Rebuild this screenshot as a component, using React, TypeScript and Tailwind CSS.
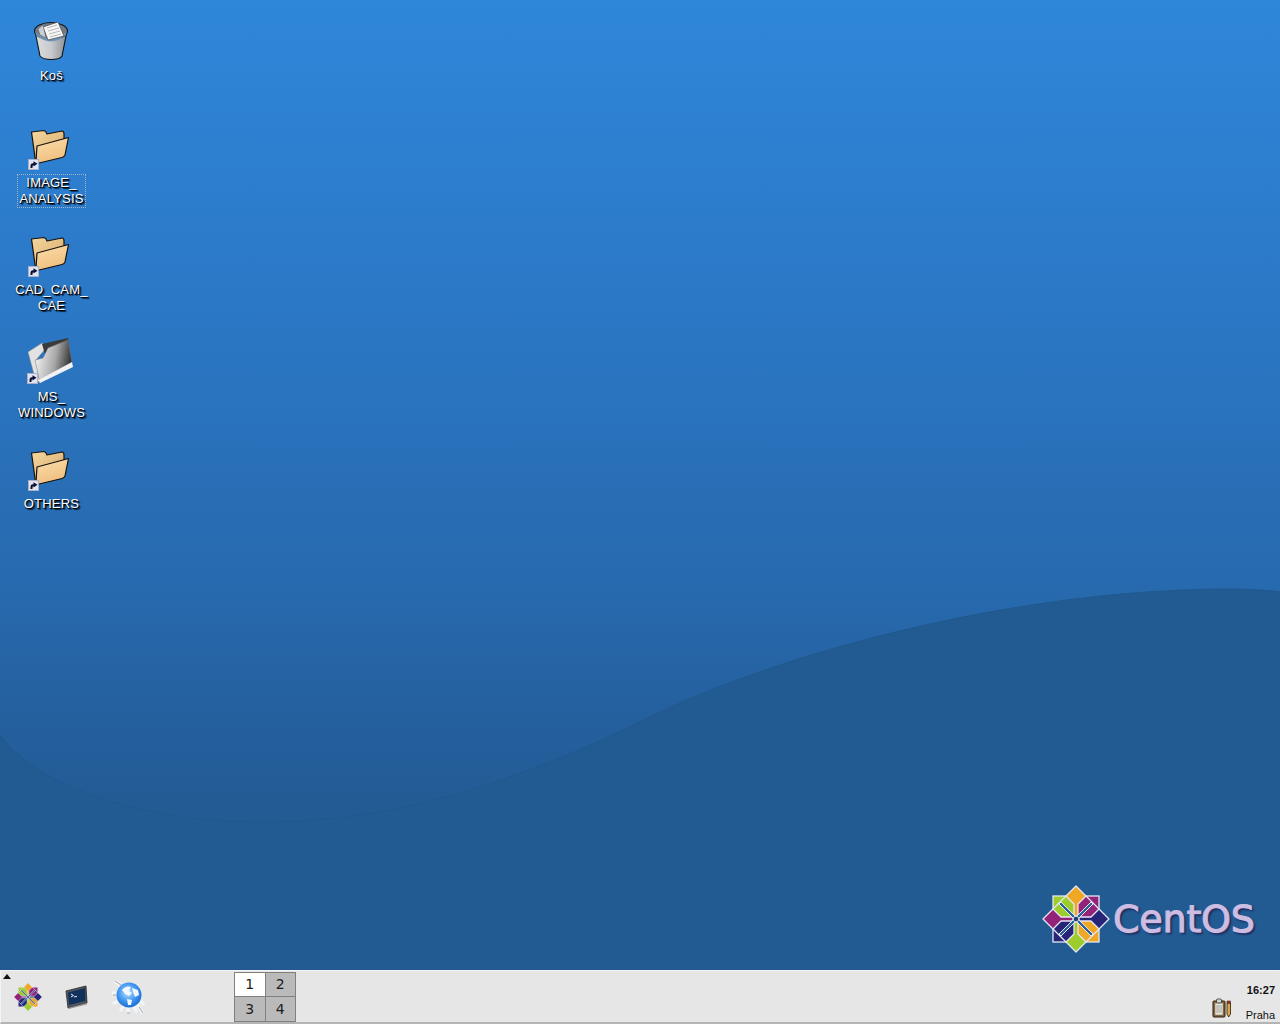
import React from "react";

function Badge({ className }: { className: string }) {
  return (
    <svg width="11" height="11" viewBox="0 0 11 11" className={`absolute ${className}`}>
      <rect x="0.5" y="0.5" width="10" height="10" fill="#dfe3f2" stroke="#aab0c8" />
      <path d="M2.5 9 L2.5 6.5 Q2.5 4.2 5 4.2 L5.5 4.2 L5.5 2.2 L9.5 4.8 L5.5 7.6 L5.5 5.9 Q4.4 5.9 4.4 9 Z" fill="#0c1030" />
    </svg>
  );
}

function Folder() {
  return (
    <div className="relative w-[44px] h-[40px]">
      <svg width="44" height="40" viewBox="0 0 44 40" className="absolute left-0 top-0">
        <defs>
          <linearGradient id="fb" x1="0" y1="0" x2="1" y2="1">
            <stop offset="0" stopColor="#f5d8a0" />
            <stop offset="1" stopColor="#d6a666" />
          </linearGradient>
          <linearGradient id="ff" x1="0" y1="0" x2="0.4" y2="1">
            <stop offset="0" stopColor="#fbdfab" />
            <stop offset="1" stopColor="#efbf80" />
          </linearGradient>
        </defs>
        <path d="M2.5 4 L15 2.5 Q17 3 18 6 L33 3 Q35 3 35 6 L35 11 L8 33 L6.5 33 Z" fill="url(#fb)" stroke="#141210" strokeWidth="1.2" strokeLinejoin="round" />
        <path d="M8 18 L39.5 9.5 L36 27 Q35 29 33 29.5 L8 35.5 Q6.5 35 7 33 Z" fill="url(#ff)" stroke="#141210" strokeWidth="1.2" strokeLinejoin="round" />
      </svg>
      <Badge className="left-[-1px] bottom-[-2px]" />
    </div>
  );
}

function GreyFolder() {
  return (
    <div className="relative w-[48px] h-[48px]">
      <svg width="48" height="48" viewBox="0 0 48 48" className="absolute left-0 top-0">
        <defs>
          <linearGradient id="gf" x1="0" y1="0.3" x2="1" y2="0.5">
            <stop offset="0" stopColor="#f4f4f4" />
            <stop offset="0.55" stopColor="#a8a8a8" />
            <stop offset="1" stopColor="#2a2a2a" />
          </linearGradient>
        </defs>
        <path d="M1 14 L15 5 L19 10 L9 22 L13 45 L8 40 Z" fill="#e2e2e2" stroke="#8a8a8a" strokeWidth="0.5" />
        <path d="M15 6 L41 0 L44 22 L22 30 Z" fill="#3a3a3a" />
        <path d="M8 22 L16 20 L21 10 L41 2 L45 25 L13 45 Z" fill="url(#gf)" stroke="#777" strokeWidth="0.5" />
        <path d="M13 45 L46 29 L45 24 L11.5 42 Z" fill="#f2f2f2" />
      </svg>
      <Badge className="left-0 bottom-[2px]" />
    </div>
  );
}

function Trash() {
  return (
    <svg width="36" height="40" viewBox="0 0 36 40">
      <defs>
        <linearGradient id="tb" x1="0" y1="0" x2="1" y2="0">
          <stop offset="0" stopColor="#dcdee0" />
          <stop offset="0.5" stopColor="#c8cacd" />
          <stop offset="1" stopColor="#8a8e92" />
        </linearGradient>
      </defs>
      <path d="M2 10 L7 35 Q10 38.5 18 38.5 Q27 38.5 29 35 L34 10 Z" fill="url(#tb)" stroke="#111" strokeWidth="1.1" />
      <ellipse cx="18" cy="10" rx="16.5" ry="8.5" fill="#6f7c88" stroke="#111" strokeWidth="1.1" />
      <path d="M2.5 11 Q18 24 33.5 11 L33 14 Q18 27 3 14 Z" fill="#6d94b8" />
      <path d="M10 6 L25 1 L31 15 L15 19 Z" fill="#f6f6f6" stroke="#444" strokeWidth="0.7" />
      <path d="M14 7 L24 4 M15 10 L26 7 M16 13 L27 10 M17 16 L28 13" stroke="#999" strokeWidth="0.7" />
      <path d="M5 8 L10 4 L13 17 L7 14 Z" fill="#c9ced3" stroke="#555" strokeWidth="0.5" />
    </svg>
  );
}

function Logo({ size }: { size: number }) {
  const g = "#9ccd2a", p = "#932279", o = "#efa724", b = "#262577", w = "#e6e6f4", m = "#2a6196";
  return (
    <svg width={size} height={size} viewBox="-35 -35 70 70" className="block">
      <rect x="-23" y="-23" width="22" height="22" fill={g} stroke={w} strokeWidth="1.3" />
      <rect x="1" y="-23" width="22" height="22" fill={p} stroke={w} strokeWidth="1.3" />
      <rect x="1" y="1" width="22" height="22" fill={o} stroke={w} strokeWidth="1.3" />
      <rect x="-23" y="1" width="22" height="22" fill={b} stroke={w} strokeWidth="1.3" />
      <path d="M0 -33 L-10 -23 L-2 -15 L-2 -3 L2 -3 L2 -15 L10 -23 Z" fill={o} stroke={w} strokeWidth="1.3" strokeLinejoin="round" />
      <path d="M0 33 L-10 23 L-2 15 L-2 3 L2 3 L2 15 L10 23 Z" fill={g} stroke={w} strokeWidth="1.3" strokeLinejoin="round" />
      <path d="M-33 0 L-23 -10 L-15 -2 L-3 -2 L-3 2 L-15 2 L-23 10 Z" fill={p} stroke={w} strokeWidth="1.3" strokeLinejoin="round" />
      <path d="M33 0 L23 -10 L15 -2 L3 -2 L3 2 L15 2 L23 10 Z" fill={b} stroke={w} strokeWidth="1.3" strokeLinejoin="round" />
      <path d="M-10 -23 L-23 -10 M10 -23 L23 -10 M-10 23 L-23 10 M10 23 L23 10" stroke={w} strokeWidth="1.3" />
      <path d="M-17 -15 L-15 -17 L0 -2 L15 -17 L17 -15 L2 0 L17 15 L15 17 L0 2 L-15 17 L-17 15 L-2 0 Z" fill={m} stroke={w} strokeWidth="1" strokeLinejoin="round" />
      <circle cx="0" cy="0" r="2.8" fill="#1b3f73" stroke="#dfe8f4" strokeWidth="0.9" />
    </svg>
  );
}

function Terminal() {
  return (
    <svg width="24" height="24" viewBox="0 0 24 24" className="block">
      <path d="M1 6 L21 1 L22 18 L3 23 Z" fill="#55585c" stroke="#222" strokeWidth="0.8" />
      <path d="M3 7.5 L20 3 L20.5 16 L4 20 Z" fill="#12305c" />
      <path d="M6 9 L8.5 10.5 L6 12" stroke="#e8eef8" strokeWidth="1" fill="none" />
      <path d="M9 12 L12 11.3" stroke="#e8eef8" strokeWidth="1" />
      <path d="M3 23 L22 18 L22 19.5 L4 24 Z" fill="#9a9da0" />
    </svg>
  );
}

function Globe() {
  return (
    <svg width="34" height="34" viewBox="0 0 34 34" className="block">
      <defs>
        <radialGradient id="gl" cx="0.45" cy="0.4" r="0.65">
          <stop offset="0" stopColor="#b8e0ff" />
          <stop offset="0.6" stopColor="#3a92ee" />
          <stop offset="1" stopColor="#1566cc" />
        </radialGradient>
      </defs>
      <path d="M4 2 L11 7 M1 13 L7 14 M2 23 L8 20 M16 32 L16 27 M30 32 L25 24 M9 30 L12 25 M24 31 L22 26 M31 24 L28 20" stroke="#f2f4f6" strokeWidth="3.4" strokeLinecap="round" />
      <path d="M3 1 L9 5 M15 33 L18 33 M31 33 L27 27 M1 15 L4 15" stroke="#7c8794" strokeWidth="0.7" />
      <circle cx="17" cy="15" r="12.5" fill="url(#gl)" />
      <path d="M10 10 Q14 5 19 7 L17 11 L20 13 L17 16 L13 14 Z M20 8 L26 10 L27 15 L23 17 L21 12 Z M15 19 L20 20 L19 25 L16 25 Z" fill="#f2f8ff" />
    </svg>
  );
}

function Clipboard() {
  return (
    <svg width="20" height="20" viewBox="0 0 20 20" className="block">
      <rect x="1" y="3" width="12" height="16" rx="1" fill="#8a6a3c" stroke="#2a1a0a" strokeWidth="1" />
      <rect x="3" y="5" width="8" height="12" fill="#e9e6d8" stroke="#666" strokeWidth="0.5" />
      <path d="M4 8 H10 M4 10 H10 M4 12 H10 M4 14 H10" stroke="#777" strokeWidth="0.6" />
      <rect x="4.5" y="1" width="5" height="4" rx="1" fill="#d0d0c8" stroke="#222" strokeWidth="0.7" />
      <path d="M15 5 H18.5 V16 L16.7 19 L15 16 Z" fill="#d9a84a" stroke="#2a1a0a" strokeWidth="0.8" />
      <rect x="15" y="3" width="3.5" height="2" fill="#b33" stroke="#2a1a0a" strokeWidth="0.5" />
    </svg>
  );
}

function Item({ icon, lines, focus }: { icon: React.ReactNode; lines: string[]; focus?: boolean }) {
  return (
    <div className="h-[107px] w-[80px] flex flex-col items-center">
      <div className="h-[52px] w-full flex items-center justify-center">{icon}</div>
      <div
        className={`ml-[1px] mt-px px-[1px] text-center text-[13px] leading-[16px] tracking-[0.2px] whitespace-nowrap text-white [text-shadow:1px_1px_0_#000,2px_2px_1px_rgba(0,0,0,0.75),0_1px_1px_rgba(0,0,0,0.5)] ${
          focus ? "outline-1 outline-dotted outline-[#9fb4c8]" : ""
        }`}
      >
        {lines.map((l) => (
          <div key={l}>{l}</div>
        ))}
      </div>
    </div>
  );
}

function Cell({ n, active }: { n: number; active?: boolean }) {
  return (
    <div
      className={`flex items-center justify-center pt-px text-[14px] font-['DejaVu_Sans',sans-serif] text-[#1c1c1c] ${
        active ? "bg-white" : "bg-[#bababa]"
      }`}
    >
      {n}
    </div>
  );
}

export default function App() {
  return (
    <div className="h-screen w-full overflow-hidden flex flex-col font-['Liberation_Sans',sans-serif]">
      <div className="relative flex-1 min-h-0 bg-[linear-gradient(180deg,#2f87da_0px,#2b78c6_300px,#2769ad_600px,#2561a0_700px,#235b95_800px,#225a92_970px)]">
        <svg className="absolute left-0 top-0 w-full h-full" viewBox="0 0 1280 970" preserveAspectRatio="none">
          <path
            d="M0 735 C40 790 150 822 262 822 C400 822 520 780 640 722 C760 660 1000 590 1225 589 C1250 589 1268 590 1280 592 L1280 970 L0 970 Z"
            fill="#225a92"
            stroke="#21588e"
          />
        </svg>
        <div className="relative w-[80px] ml-[11px] pt-[15px]">
          <Item icon={<Trash />} lines={["Koš"]} />
          <Item icon={<Folder />} lines={["IMAGE_", "ANALYSIS"]} focus />
          <Item icon={<Folder />} lines={["CAD_CAM_", "CAE"]} />
          <Item icon={<GreyFolder />} lines={["MS_", "WINDOWS"]} />
          <Item icon={<Folder />} lines={["OTHERS"]} />
        </div>
        <div className="absolute left-[1041px] top-[884px] flex items-center">
          <Logo size={70} />
          <span className="ml-[2px] text-[38px] leading-none font-['DejaVu_Sans',sans-serif] text-[#cdbde2] tracking-[-0.2px] [-webkit-text-stroke:1px_#cdbde2] [text-shadow:1px_1px_0_#5a4f86,2px_2px_2px_rgba(20,20,60,0.8)]">
            CentOS
          </span>
        </div>
      </div>
      <div className="relative h-[54px] shrink-0 flex items-center bg-[#e6e6e6] border-t border-t-[#f4f4f4] border-b-2 border-b-[#b4b4b4] border-l border-l-[#f4f4f4]">
        <svg width="8" height="5" viewBox="0 0 8 5" className="absolute left-[2px] top-[3px]">
          <path d="M4 0 L8 5 L0 5 Z" fill="#111" />
        </svg>
        <div className="ml-[12px]"><Logo size={30} /></div>
        <div className="ml-[22px]"><Terminal /></div>
        <div className="ml-[23px]"><Globe /></div>
        <div className="ml-[88px] w-[62px] h-[50px] grid grid-cols-2 grid-rows-2 gap-px bg-[#808080] border border-[#808080]">
          <Cell n={1} active />
          <Cell n={2} />
          <Cell n={3} />
          <Cell n={4} />
        </div>
        <div className="ml-auto mr-[5px] flex items-end h-full">
          <div className="mb-[4px] mr-[14px]"><Clipboard /></div>
          <div className="flex flex-col items-end h-full text-[11px] text-[#111]">
            <span className="mt-[12px] font-bold leading-[14px]">16:27</span>
            <span className="mt-[11px] leading-[14px]">Praha</span>
          </div>
        </div>
      </div>
    </div>
  );
}
